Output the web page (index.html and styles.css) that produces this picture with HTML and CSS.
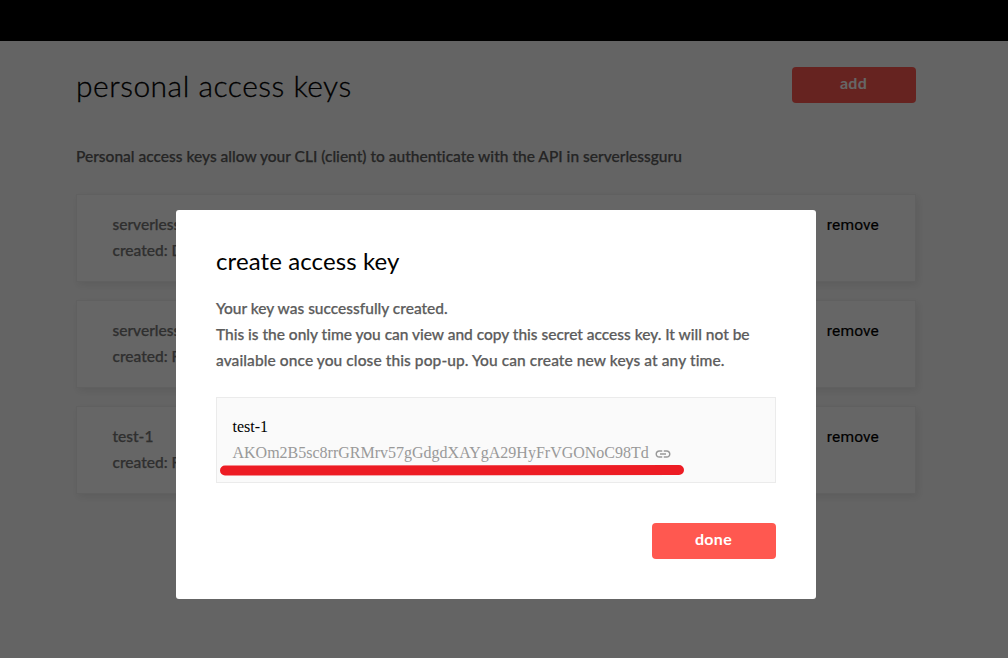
FILE: index.html
```html
<!DOCTYPE html>
<html lang="en">
<head>
<meta charset="utf-8">
<title>personal access keys</title>
<link rel="stylesheet" href="styles.css">
</head>
<body>
<header class="topbar"></header>
<main class="page">
  <div class="page-head">
    <h1 class="page-title">personal access keys</h1>
    <button class="button">add</button>
  </div>
  <p class="intro">Personal access keys allow your CLI (client) to authenticate with the API in serverlessguru</p>
  <section class="key-list">
    <article class="key-card">
      <div class="key-info"><div>serverless</div><div>created: D</div></div>
      <a class="remove">remove</a>
    </article>
    <article class="key-card">
      <div class="key-info"><div>serverless</div><div>created: F</div></div>
      <a class="remove">remove</a>
    </article>
    <article class="key-card">
      <div class="key-info"><div>test-1</div><div>created: F</div></div>
      <a class="remove">remove</a>
    </article>
  </section>
</main>
<div class="overlay">
  <section class="modal">
    <h2 class="modal-title">create access key</h2>
    <div class="modal-text">
      <div class="line-a">Your key was successfully created.</div>
      <div class="line-b">This is the only time you can view and copy this secret access key. It will not be</div>
      <div class="line-c">available once you close this pop-up. You can create new keys at any time.</div>
    </div>
    <div class="secret">
      <div class="secret-name">test-1</div>
      <div class="secret-row">
        <span class="secret-value">AKOm2B5sc8rrGRMrv57gGdgdXAYgA29HyFrVGONoC98Td</span>
        <svg class="link-icon" viewBox="0 0 24 24"><path d="M3.9 12c0-1.71 1.39-3.1 3.1-3.1h4V7H7c-2.76 0-5 2.24-5 5s2.24 5 5 5h4v-1.9H7c-1.71 0-3.100-1.39-3.100-3.100zM8 13h8v-2H8v2zm9-6h-4v1.900h4c1.710 0 3.100 1.390 3.100 3.100s-1.390 3.100-3.100 3.100h-4V17h4c2.760 0 5-2.240 5-5s-2.240-5-5-5z"/></svg>
      </div>
      <svg class="marker" viewBox="0 0 464 12"><path d="M5 6.500L459 6" stroke="#ed1c24" stroke-width="10" stroke-linecap="round"/></svg>
    </div>
    <div class="modal-actions"><button class="button">done</button></div>
  </section>
</div>
</body>
</html>
```

FILE: styles.css
```css
* { box-sizing: border-box; }
body {
  margin: 0;
  height: 658px;
  overflow: hidden;
  background: #fafafa;
  font: 500 16px/26px Lato, sans-serif;
  font-variant-ligatures: none;
  color: #5c5c5c;
}
h1, h2, p { margin: 0; }
.topbar { height: 41px; background: #000; }
.page { width: 840px; margin: 0 0 0 76px; padding-top: 26px; }
.page-head { display: flex; justify-content: space-between; height: 76px; }
.page-title {
  font-size: 30px;
  font-weight: 300;
  line-height: 36px;
  letter-spacing: 0.5px;
  -webkit-text-stroke: 0.3px #000;
  color: #000;
  white-space: nowrap;
}
.button {
  width: 124px;
  height: 36px;
  padding: 0 1px 4px 0;
  border: 0;
  border-radius: 4px;
  background: #ff5850;
  color: #fff;
  font: 700 16px/32px Lato, sans-serif;
  letter-spacing: 0.3px;
}
.intro, .key-info, .modal-text { -webkit-text-stroke: 0.25px currentColor; }
.intro { font-size: 15.5px; letter-spacing: 0.01px; white-space: nowrap; }
.key-list { display: flex; flex-direction: column; gap: 18px; padding-top: 25px; }
.key-card {
  display: flex;
  justify-content: space-between;
  height: 88px;
  padding: 17px 36px 0 35.5px;
  border: 1px solid #f0f0f0;
  background: #fff;
  box-shadow: 2px 3px 8px rgba(0, 0, 0, 0.08);
}
.key-info { margin-top: -1px; font-size: 15.5px; color: #757575; }
.remove { font: 400 15.5px/26px Roboto, sans-serif; letter-spacing: 0.15px; -webkit-text-stroke: 0.2px #000; color: #000; }
.overlay {
  position: fixed;
  inset: 0;
  padding: 210px 192px 0 176px;
  background: rgba(0, 0, 0, 0.6);
}
.modal { height: 389px; padding: 35px 40px 40px; border-radius: 3px; background: #fff; }
.modal-title {
  font-size: 24px;
  font-weight: 400;
  line-height: 32px;
  letter-spacing: 0.1px;
  color: #000;
}
.modal-text { padding-top: 18px; font-size: 15.5px; white-space: nowrap; }
.line-b { letter-spacing: -0.01px; }
.line-c { letter-spacing: 0.09px; }
.secret {
  position: relative;
  height: 86px;
  margin-top: 24px;
  padding: 16px 16px 16px 15.5px;
  border: 1px solid #ebebeb;
  background: #fafafa;
  font: 400 16px/26px "Liberation Serif", serif;
}
.secret-name { color: #000; }
.secret-row { display: flex; align-items: center; gap: 5px; color: #999; }
.link-icon { width: 18px; height: 18px; margin-top: 1px; fill: #999; }
.marker { position: absolute; left: 3px; top: 66px; width: 464px; height: 12px; fill: none; }
.modal-actions { display: flex; justify-content: flex-end; padding-top: 40px; }
```
